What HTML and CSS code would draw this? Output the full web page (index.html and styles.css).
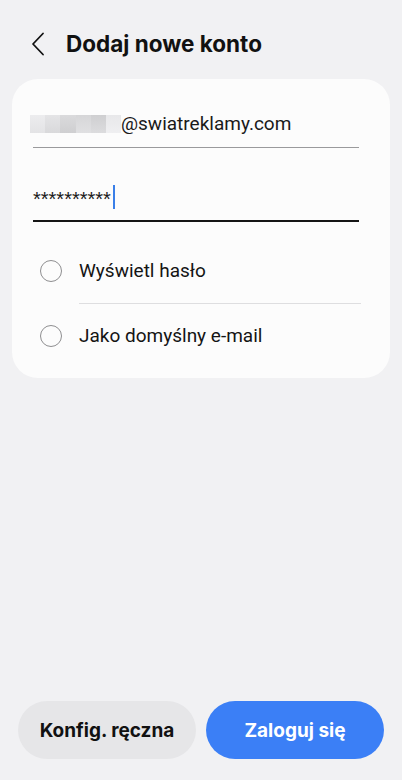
FILE: index.html
```html
<!DOCTYPE html>
<html lang="pl">
<head>
    <meta charset="UTF-8">
    <meta name="viewport" content="width=device-width, initial-scale=1.0">
    <title>Dodaj nowe konto</title>
    <link rel="stylesheet" href="styles.css">
</head>
<body>
    <!-- Header -->
    <header class="top-bar">
        <button class="back-btn" aria-label="Wstecz">
            <svg width="14" height="24" viewBox="0 0 14 24">
                <path d="M12 1.5 L2 12 L12 22.5" fill="none" stroke="#111" stroke-width="1.8" stroke-linecap="round" stroke-linejoin="round"/>
            </svg>
        </button>
        <h1 class="title">Dodaj nowe konto</h1>
    </header>

    <!-- Account form -->
    <main class="content">
        <section class="card">
            <div class="field">
                <span class="blurred" aria-hidden="true">
                    <i class="b1"></i><i class="b2"></i><i class="b3"></i><i class="b4"></i><i class="b5"></i><i class="b6"></i>
                </span>
                <span class="field-text">@swiatreklamy.com</span>
            </div>
            <div class="field field-active">
                <span class="field-text stars">**********</span><span class="cursor"></span>
            </div>

            <ul class="options">
                <li class="option">
                    <span class="radio"></span>
                    <span class="option-label">Wyświetl hasło</span>
                </li>
                <li class="option">
                    <span class="radio"></span>
                    <span class="option-label">Jako domyślny e-mail</span>
                </li>
            </ul>
        </section>
    </main>

    <!-- Bottom actions -->
    <footer class="actions">
        <button class="btn btn-secondary">Konfig. ręczna</button>
        <button class="btn btn-primary">Zaloguj się</button>
    </footer>
</body>
</html>
```

FILE: styles.css
```css
/* Base Reset */
* {
    margin: 0;
    padding: 0;
    box-sizing: border-box;
}

body {
    font-family: Inter, Roboto, sans-serif;
    background-color: #f1f1f3;
    color: #111;
    width: 402px;
    height: 780px;
    display: flex;
    flex-direction: column;
    overflow: hidden;
}

/* Header */
.top-bar {
    display: flex;
    align-items: center;
    height: 79px;
    padding: 8px 0 0 31px;
    gap: 21px;
}

.back-btn {
    background: none;
    border: none;
    display: flex;
    align-items: center;
    width: 14px;
    height: 24px;
}

.title {
    font-size: 22.5px;
    font-weight: 700;
    letter-spacing: 0;
    color: #111;
}

/* Card */
.content {
    flex: 1;
    padding: 0 12px;
}

.card {
    background: #fcfcfc;
    border-radius: 26px;
    padding: 17px 31px 10px 21px;
    height: 299px;
}

.field {
    display: flex;
    align-items: center;
    height: 52px;
    padding-top: 4px;
    border-bottom: 1.5px solid #9a9a9c;
}

.field + .field {
    margin-top: 14px;
}

.field-active {
    border-bottom: 2px solid #151515;
    height: 60px;
    padding-top: 0;
    align-items: flex-end;
    padding-bottom: 11px;
}

.field-text {
    font-family: Roboto, sans-serif;
    font-size: 19px;
    color: #1a1a1a;
}

.stars {
    font-family: "Liberation Sans", sans-serif;
    font-size: 20px;
    line-height: 20px;
    letter-spacing: 0;
}

.cursor {
    display: inline-block;
    width: 2px;
    height: 24px;
    background: #3a7fe8;
    margin-left: 2px;
}

.blurred {
    display: flex;
    height: 18px;
    width: 91px;
    margin-left: -3px;
}

.blurred i {
    display: block;
    height: 100%;
    flex: 1;
}

.b1 { background: linear-gradient(#ececee, #e3e3e5); }
.b2 { background: linear-gradient(#e4e4e6, #d9d9db); }
.b3 { background: linear-gradient(#dadadc, #cfcfd1); }
.b4 { background: linear-gradient(#d6d6d8, #e0e0e2); }
.b5 { background: linear-gradient(#cfcfd1, #dcdcde); }
.b6 { background: linear-gradient(#e8e8ea, #efeff1); }

/* Options */
.options {
    list-style: none;
    margin-top: 16px;
    margin-right: -2px;
}

.option {
    display: flex;
    align-items: center;
    height: 65px;
    gap: 17px;
    padding-left: 7px;
}

.option + .option {
    position: relative;
}

.option + .option::before {
    content: "";
    position: absolute;
    top: 0;
    left: 46px;
    right: 0;
    border-top: 1px solid #dedee0;
}

.radio {
    width: 22px;
    height: 22px;
    border: 1.6px solid #8e8e90;
    border-radius: 50%;
    flex-shrink: 0;
}

.option-label {
    font-family: Roboto, sans-serif;
    font-size: 19px;
    color: #141414;
}

/* Bottom actions */
.actions {
    display: flex;
    gap: 10px;
    padding: 0 18px 21px;
}

.btn {
    flex: 1;
    height: 58px;
    border: none;
    border-radius: 29px;
    font-family: Inter, Roboto, sans-serif;
    font-size: 19px;
    font-weight: 700;
}

.btn-secondary {
    background-color: #e6e6e8;
    color: #111;
}

.btn-primary {
    background-color: #3b7ff6;
    color: #fff;
}
```
